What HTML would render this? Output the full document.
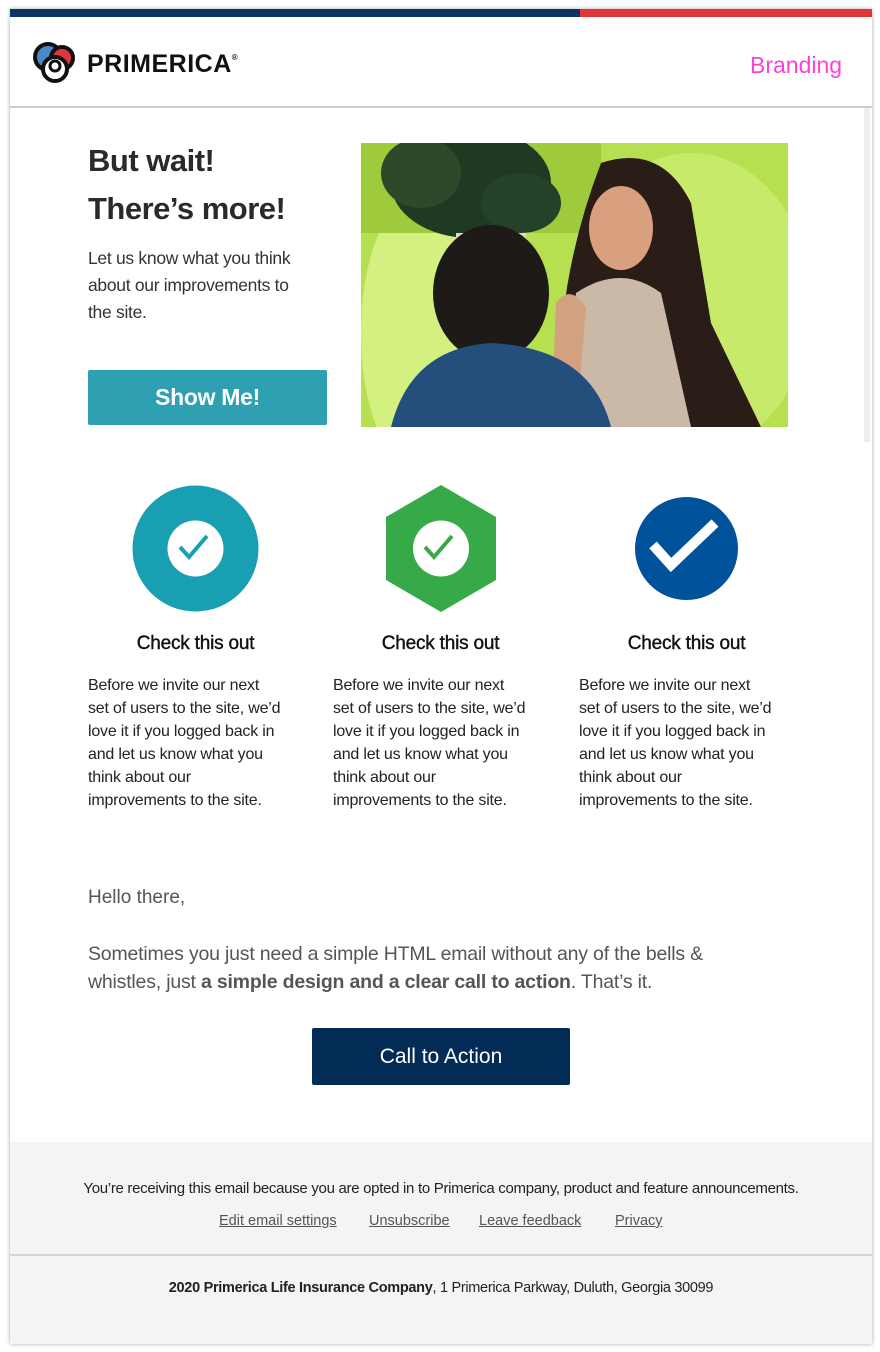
<!DOCTYPE html>
<html><head><meta charset="utf-8"><style>
*{margin:0;padding:0;box-sizing:border-box}
body{width:880px;height:1352px;background:#fff;font-family:"Liberation Sans",sans-serif;position:relative;overflow:hidden}
.a{position:absolute}
.card{left:10px;top:9px;width:862px;height:1335px;background:#fff;box-shadow:0 0 4px rgba(0,0,0,.35)}
.col h3{font-size:19px;font-weight:normal;color:#111;text-align:center;letter-spacing:-.2px;-webkit-text-stroke:.4px #111}
.col p{font-size:16px;line-height:23px;color:#222;margin-top:19px;letter-spacing:-.2px;width:196px}
.ft a{color:#555;text-decoration:underline;font-size:14.5px}
</style></head><body>
<div class="a card"></div>
<div class="a" style="left:10px;top:9px;width:570px;height:8px;background:#0b3461"></div>
<div class="a" style="left:580px;top:9px;width:292px;height:8px;background:#e0353b"></div>
<svg class="a" style="left:31px;top:39px" width="50" height="46" viewBox="0 0 50 46">
<circle cx="17" cy="18" r="13" fill="#4a88c7" stroke="#111" stroke-width="4"/>
<circle cx="31" cy="19" r="11" fill="#e0353b" stroke="#111" stroke-width="4"/>
<circle cx="24" cy="30" r="12" fill="#fff" stroke="#111" stroke-width="4"/>
<circle cx="24" cy="27" r="5" fill="#fff" stroke="#111" stroke-width="3"/>
</svg>
<div class="a" style="left:87px;top:50px;font-size:25px;font-weight:bold;color:#111;letter-spacing:.5px">PRIMERICA<sup style="font-size:8px;vertical-align:12px">®</sup></div>
<div class="a" style="left:750px;top:52px;font-size:23px;color:#ff3fd6">Branding</div>
<div class="a" style="left:10px;top:106px;width:862px;height:2px;background:#ccc"></div>
<div class="a" style="left:864px;top:108px;width:6px;height:334px;background:#eee"></div>
<div class="a" style="left:88px;top:137px;font-size:31px;font-weight:bold;color:#2a2a2a;line-height:48px;letter-spacing:-.5px">But wait!<br>There’s more!</div>
<div class="a" style="left:88px;top:245px;width:226px;font-size:17.5px;line-height:27px;color:#333;letter-spacing:-.3px">Let us know what you think about our improvements to the site.</div>
<div class="a" style="left:88px;top:370px;width:239px;height:55px;background:#2ea0b1;border-radius:2px;color:#fff;font-size:23px;font-weight:bold;text-align:center;line-height:55px;letter-spacing:-.3px">Show Me!</div>
<svg class="a" style="left:361px;top:143px" width="427" height="284" viewBox="0 0 427 284">
<rect width="427" height="284" fill="#b7e050"/>
<ellipse cx="60" cy="190" rx="60" ry="140" fill="#d4f080"/>
<ellipse cx="330" cy="160" rx="120" ry="150" fill="#c8ea6a"/>
<rect x="0" y="0" width="240" height="90" fill="#9fca3c"/>
<ellipse cx="110" cy="40" rx="80" ry="55" fill="#1f3a22"/>
<ellipse cx="60" cy="30" rx="40" ry="35" fill="#2c4a2a"/>
<ellipse cx="160" cy="60" rx="40" ry="30" fill="#24412a"/>
<rect x="95" y="90" width="70" height="100" fill="#d8dcd0"/>
<path d="M240 20 Q300 0 330 60 L350 180 L400 284 L200 284 Q190 150 240 20Z" fill="#2a1c16"/>
<ellipse cx="260" cy="85" rx="32" ry="42" fill="#d9a07f"/>
<path d="M215 150 Q260 120 300 150 L330 284 L200 284Z" fill="#cbb9a8"/>
<path d="M195 160 Q210 140 225 165 L215 284 L190 284Z" fill="#d3a080"/>
<ellipse cx="130" cy="150" rx="58" ry="68" fill="#1d1a18"/>
<path d="M30 284 Q50 205 130 200 Q230 205 250 284Z" fill="#244f7c"/>
</svg>
<svg class="a" style="left:132px;top:485px" width="127" height="127" viewBox="0 0 127 127">
<circle cx="63.5" cy="63.5" r="63" fill="#18a0b2"/><circle cx="63.5" cy="63.5" r="28" fill="#fff"/>
<path d="M48 62 L57 72 L75 51" fill="none" stroke="#18a0b2" stroke-width="4"/></svg>
<svg class="a" style="left:386px;top:485px" width="110" height="127" viewBox="0 0 110 127">
<polygon points="55,0 110,32 110,95 55,127 0,95 0,32" fill="#36a948"/><circle cx="55" cy="63.5" r="28" fill="#fff"/>
<path d="M39 62 L48 72 L66 51" fill="none" stroke="#36a948" stroke-width="4"/></svg>
<svg class="a" style="left:635px;top:497px" width="103" height="103" viewBox="0 0 103 103">
<circle cx="51.5" cy="51.5" r="51.5" fill="#00529b"/>
<path d="M18 48 L36 68 L80 26" fill="none" stroke="#fff" stroke-width="10"/></svg>
<div class="a col" style="left:88px;top:633px;width:215px"><h3>Check this out</h3><p>Before we invite our next set of users to the site, we’d love it if you logged back in and let us know what you think about our improvements to the site.</p></div>
<div class="a col" style="left:333px;top:633px;width:215px"><h3>Check this out</h3><p>Before we invite our next set of users to the site, we’d love it if you logged back in and let us know what you think about our improvements to the site.</p></div>
<div class="a col" style="left:579px;top:633px;width:215px"><h3>Check this out</h3><p>Before we invite our next set of users to the site, we’d love it if you logged back in and let us know what you think about our improvements to the site.</p></div>
<div class="a" style="left:88px;top:887px;font-size:19px;color:#555">Hello there,</div>
<div class="a" style="left:88px;top:940px;width:670px;font-size:19.5px;line-height:28px;color:#555;letter-spacing:-.2px">Sometimes you just need a simple HTML email without any of the bells &amp; whistles, just <b>a simple design and a clear call to action</b>. That’s it.</div>
<div class="a" style="left:312px;top:1028px;width:258px;height:57px;background:#022c55;border-radius:2px;color:#fff;font-size:21px;text-align:center;line-height:57px">Call to Action</div>
<div class="a ft" style="left:10px;top:1142px;width:862px;height:202px;background:#f4f4f4">
<div class="a" style="left:0;top:38px;width:862px;text-align:center;font-size:15px;color:#222;letter-spacing:-.3px">You’re receiving this email because you are opted in to Primerica company, product and feature announcements.</div>
<a class="a" style="left:209px;top:71px">Edit email settings</a>
<a class="a" style="left:359px;top:71px">Unsubscribe</a>
<a class="a" style="left:469px;top:71px">Leave feedback</a>
<a class="a" style="left:605px;top:71px">Privacy</a>
<div class="a" style="left:0;top:112px;width:862px;height:2px;background:#d4d4d4"></div>
<div class="a" style="left:0;top:138px;width:862px;text-align:center;font-size:14.5px;color:#222;letter-spacing:-.3px"><b>2020 Primerica Life Insurance Company</b>, 1 Primerica Parkway, Duluth, Georgia 30099</div>
</div>
</body></html>
